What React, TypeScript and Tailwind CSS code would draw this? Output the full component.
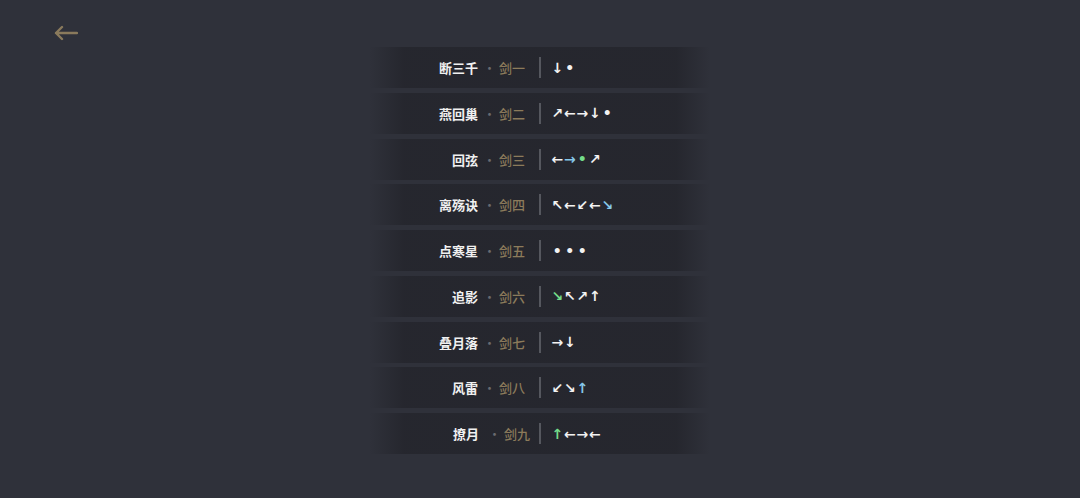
import React from "react";

type Mark = { s: string; c?: "blue" | "green" };

const moves: { name: string; sword: string; seq: Mark[]; wide?: boolean }[] = [
  { name: "断三千", sword: "剑一", seq: [{ s: "↓" }, { s: "•" }] },
  { name: "燕回巢", sword: "剑二", seq: [{ s: "↗" }, { s: "←" }, { s: "→" }, { s: "↓" }, { s: "•" }] },
  { name: "回弦", sword: "剑三", seq: [{ s: "←" }, { s: "→", c: "blue" }, { s: "•", c: "green" }, { s: "↗" }] },
  { name: "离殇诀", sword: "剑四", seq: [{ s: "↖" }, { s: "←" }, { s: "↙" }, { s: "←" }, { s: "↘", c: "blue" }] },
  { name: "点寒星", sword: "剑五", seq: [{ s: "•" }, { s: "•" }, { s: "•" }] },
  { name: "追影", sword: "剑六", seq: [{ s: "↘", c: "green" }, { s: "↖" }, { s: "↗" }, { s: "↑" }] },
  { name: "叠月落", sword: "剑七", seq: [{ s: "→" }, { s: "↓" }] },
  { name: "风雷", sword: "剑八", seq: [{ s: "↙" }, { s: "↘" }, { s: "↑", c: "blue" }] },
  { name: "撩月", sword: "剑九", seq: [{ s: "↑", c: "green" }, { s: "←" }, { s: "→" }, { s: "←" }], wide: true },
];

function markColor(c?: "blue" | "green") {
  if (c === "blue") return "text-[#86c8ea]";
  if (c === "green") return "text-[#74dc8a]";
  return "text-[#f2f2f2]";
}

export default function App() {
  return (
    <div className="w-full h-[498px] bg-[#2f313a] font-['Noto_Sans_CJK_SC',sans-serif] overflow-hidden">
      <div className="px-[54px] pt-[22px]">
        <button className="w-[24px] h-[22px] flex items-center text-[#8a7a5c]">
          <svg width="24" height="22" viewBox="0 0 24 22" fill="none">
            <path d="M2 11H23M8 5L2 11L8 17" stroke="currentColor" strokeWidth="2.4" strokeLinecap="round" strokeLinejoin="round" />
          </svg>
        </button>
      </div>

      <div className="mt-[3px] flex flex-col items-center gap-[4.75px]">
        {moves.map((m) => (
          <div
            key={m.name}
            className="w-[340px] h-[41px] flex items-center bg-[linear-gradient(90deg,rgba(36,37,44,0)_0%,rgba(36,37,44,0.85)_10%,rgba(36,37,44,0.85)_90%,rgba(36,37,44,0)_100%)]"
          >
            <div className="w-[169px] flex justify-end items-center text-[13px] leading-none pr-[14px]">
              <span className="font-bold text-[#f0f0f0]">{m.name}</span>
              <span className={`text-[#6a6b70] ${m.wide ? "ml-[9px] mr-[3px]" : "ml-[5px] mr-[3px]"}`}>·</span>
              <span className={`font-medium text-[#8c7b5b] ${m.wide ? "mr-[-5px]" : ""}`}>{m.sword}</span>
            </div>
            <div className="w-[2px] h-[21px] bg-[#55575e]" />
            <div className="ml-[10px] flex items-center font-['DejaVu_Sans',sans-serif] text-[14px] font-bold leading-none">
              {m.seq.map((k, i) => (
                <span key={i} className={`w-[12.5px] text-center ${markColor(k.c)}`}>
                  {k.s}
                </span>
              ))}
            </div>
          </div>
        ))}
      </div>
    </div>
  );
}
